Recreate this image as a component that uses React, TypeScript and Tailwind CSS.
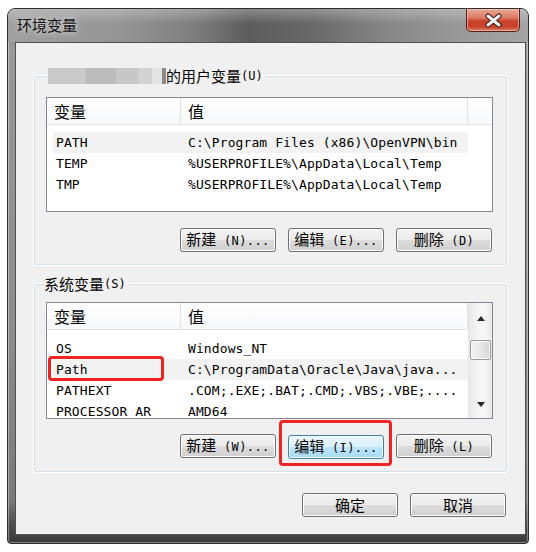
import type { ReactNode } from 'react';

const cjk = "font-['Noto_Sans_CJK_SC',sans-serif]";
const mono = "font-['DejaVu_Sans_Mono',monospace]";

type Row = { name: string; value: string; hot?: boolean; marked?: boolean };

const userRows: Row[] = [
  { name: 'PATH', value: 'C:\\Program Files (x86)\\OpenVPN\\bin', hot: true },
  { name: 'TEMP', value: '%USERPROFILE%\\AppData\\Local\\Temp' },
  { name: 'TMP', value: '%USERPROFILE%\\AppData\\Local\\Temp' },
];

const systemRows: Row[] = [
  { name: 'OS', value: 'Windows_NT' },
  { name: 'Path', value: 'C:\\ProgramData\\Oracle\\Java\\java...', hot: true, marked: true },
  { name: 'PATHEXT', value: '.COM;.EXE;.BAT;.CMD;.VBS;.VBE;....' },
  { name: 'PROCESSOR_AR', value: 'AMD64' },
];

const WinButton = ({ label, hint, focused }: { label: string; hint?: string; focused?: boolean }) => (
  <button
    className={
      focused
        ? `h-[24px] w-[96px] rounded-[3px] border border-[#3c7fb1] bg-[linear-gradient(#eaf6fd_0%,#d9f0fc_50%,#bee6fd_51%,#a7d9f5_100%)] shadow-[inset_0_0_0_1px_#fbfdff] text-[15px] leading-[20px] text-black ${cjk}`
        : `h-[24px] w-[96px] rounded-[3px] border border-[#707070] bg-[linear-gradient(#f2f2f2_0%,#ebebeb_50%,#dddddd_51%,#cfcfcf_100%)] shadow-[inset_0_0_0_1px_#fcfcfc] text-[15px] leading-[20px] text-black ${cjk}`
    }
  >
    {label}
    {hint && <span className={`${mono} text-[12px] tracking-[0.4px]`}>{hint}</span>}
  </button>
);

const Scrollbar = () => (
  <div className="flex w-[24px] flex-col border-l border-[#e6e6e6] bg-[linear-gradient(90deg,#e9e9e9,#f5f5f5_40%,#f5f5f5_70%,#eaeaea)]">
    <div className="flex h-[30px] items-center justify-center">
      <svg width="8" height="5" viewBox="0 0 8 5">
        <path d="M0 5 L4 0 L8 5 Z" fill="#2a2a2a" />
      </svg>
    </div>
    <div className="mx-[1px] mt-[7px] h-[20px] rounded-[2px] border border-[#9a9a9a] bg-[linear-gradient(90deg,#f3f3f3,#e8e8e8_50%,#d6d6d6)] shadow-[inset_0_0_0_1px_#fafafa]" />
    <div className="flex-1" />
    <div className="flex h-[28px] items-center justify-center">
      <svg width="8" height="5" viewBox="0 0 8 5">
        <path d="M0 0 L8 0 L4 5 Z" fill="#2a2a2a" />
      </svg>
    </div>
  </div>
);

const ListView = ({ rows, height, gap, scroll }: { rows: Row[]; height: string; gap: string; scroll?: boolean }) => (
  <div className={`flex overflow-hidden border border-[#828790] bg-white ${height}`}>
    <div className="flex min-w-0 flex-1 flex-col">
      <div className={`flex h-[27px] shrink-0 items-center border-b border-[#e3e3e3] bg-[linear-gradient(#ffffff,#f7f8fa)] text-[16px] text-black ${cjk}`}>
        <div className="flex h-full w-[134px] items-center border-r border-[#e3e3e3] pl-[7px]">变量</div>
        <div className="flex h-full w-[287px] items-center border-r border-[#e3e3e3] pl-[7px]">值</div>
        <div className="flex-1" />
      </div>
      <div className={gap}>
        {rows.map(row => (
          <div
            key={row.name}
            className={`relative ml-[6px] flex h-[21px] w-[415px] items-center whitespace-nowrap text-[13px] tracking-[0.1px] text-black ${mono} ${row.hot ? 'bg-[#f2f2f2]' : ''}`}
          >
            <div className="w-[135px] overflow-hidden pl-[3px]">{row.name}</div>
            <div className="flex-1 overflow-hidden">{row.value}</div>
            {row.marked && (
              <div className="absolute left-[-5px] top-[-3px] h-[25px] w-[116px] rounded-[4px] border-[3px] border-[#ee2424]" />
            )}
          </div>
        ))}
      </div>
    </div>
    {scroll && <Scrollbar />}
  </div>
);

const GroupBox = ({ legend, className, children }: { legend: ReactNode; className: string; children: ReactNode }) => (
  <fieldset
    className={`mx-[18px] rounded-[3px] border border-[#d5dfe5] pb-[12px] pl-[11px] pr-[13px] shadow-[0_0_0_1px_#ffffff] ${className}`}
  >
    {legend}
    {children}
  </fieldset>
);

const App = () => {
  return (
    <div className="h-[552px] w-[536px] bg-white pl-[7px] pt-[8px]">
      <div className="flex h-[536px] w-[522px] flex-col rounded-b-[4px] rounded-t-[8px] border border-[#2e2e2e] bg-[linear-gradient(180deg,#9a9a9a_0%,#8c8c8c_60%,#7a7a7a_92%,#4a4a4a_97%,#3c3c3c_100%)] shadow-[inset_0_0_0_1px_rgba(255,255,255,0.35)]">
        {/* title bar */}
        <div className="flex h-[33px] shrink-0 items-start justify-between rounded-t-[7px] bg-[linear-gradient(180deg,rgba(255,255,255,0.28)_0%,rgba(255,255,255,0)_45%),linear-gradient(90deg,#a0a0a0_0%,#949494_22%,#7e7e7e_36%,#5c5c5c_46%,#676767_58%,#858585_72%,#9a9a9a_88%,#a4a4a4_100%)] pl-[9px] pr-[8px]">
          <div className={`pt-[6px] text-[15px] leading-[20px] text-[#111] [text-shadow:0_0_6px_rgba(255,255,255,0.9)] ${cjk}`}>
            环境变量
          </div>
          <button className="flex h-[23px] w-[54px] items-center justify-center rounded-b-[5px] border border-t-0 border-[#5a1d14] bg-[linear-gradient(180deg,#eaa898_0%,#dc7a64_40%,#c8432c_55%,#c7412b_80%,#d9826a_100%)] shadow-[inset_0_0_0_1px_rgba(255,220,210,0.5)]">
            <svg width="19" height="15" viewBox="0 0 19 15">
              <path d="M4 3 L15 12 M15 3 L4 12" stroke="#3b1610" strokeWidth="5" strokeLinecap="round" />
              <path d="M4 3 L15 12 M15 3 L4 12" stroke="#f4f4f4" strokeWidth="3" strokeLinecap="round" />
            </svg>
          </button>
        </div>

        {/* client area */}
        <div className="flex flex-1 px-[7px] pb-[8px]">
          <div className="flex flex-1 flex-col border border-[#505050] bg-[#f0f0f0]">
            <GroupBox
              className="mt-[23px]"
              legend={
                <legend className={`ml-[2px] flex h-[20px] items-center pr-[3px] text-[15px] text-black ${cjk}`}>
                  <span className="flex h-[16px] blur-[0.6px]">
                    <span className="w-[38px] bg-[#c9c9c9]" />
                    <span className="w-[30px] bg-[#bcbcbc]" />
                    <span className="w-[22px] bg-[#c6c6c6]" />
                    <span className="w-[14px] bg-[#d2d2d2]" />
                    <span className="w-[10px] bg-[#e4e4e4]" />
                    <span className="w-[4px] bg-[#8a8a8a]" />
                  </span>
                  的用户变量<span className={`${mono} text-[12px]`}>(U)</span>
                </legend>
              }
            >
              <div className="mt-[11px]">
                <ListView rows={userRows} height="h-[115px]" gap="pt-[7px]" />
              </div>
              <div className="mt-[16px] flex justify-end gap-[12px] pr-[1px]">
                <WinButton label="新建" hint=" (N)..." />
                <WinButton label="编辑" hint=" (E)..." />
                <WinButton label="删除" hint=" (D)" />
              </div>
            </GroupBox>

            <GroupBox
              className="mt-[9px]"
              legend={
                <legend className={`ml-[-2px] flex h-[20px] items-center pr-[3px] text-[15px] text-black ${cjk}`}>
                  系统变量<span className={`${mono} text-[12px]`}>(S)</span>
                </legend>
              }
            >
              <div className="mt-[8px]">
                <ListView rows={systemRows} height="h-[117px]" gap="pt-[8px]" scroll />
              </div>
              <div className="mt-[15px] flex justify-end gap-[12px] pr-[1px]">
                <WinButton label="新建" hint=" (W)..." />
                <div className="relative">
                  <WinButton label="编辑" hint=" (I)..." focused />
                  <div className="absolute -bottom-[7px] -left-[9px] -right-[8px] -top-[14px] rounded-[4px] border-[3px] border-[#ee2424]" />
                </div>
                <WinButton label="删除" hint=" (L)" />
              </div>
            </GroupBox>

            <div className="mr-[19px] mt-[21px] flex justify-end gap-[12px]">
              <WinButton label="确定" />
              <WinButton label="取消" />
            </div>
          </div>
        </div>
      </div>
    </div>
  );
};

export default App;
